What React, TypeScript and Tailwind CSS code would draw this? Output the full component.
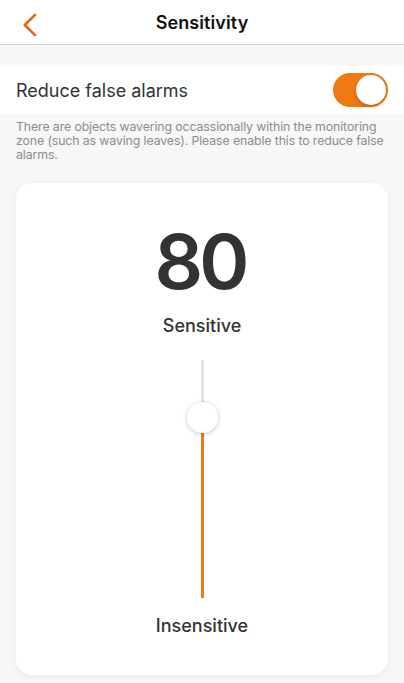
import React from 'react';

const ORANGE = '#f07a12';

function Toggle({ on }: { on: boolean }) {
  return (
    <div className={`w-[55px] h-[34px] rounded-full p-[2px] flex items-center ${on ? 'justify-end bg-[#f07a12]' : 'justify-start bg-[#e5e5e5]'}`}>
      <div className="w-[30px] h-[30px] rounded-full bg-white shadow-[0_2px_4px_rgba(0,0,0,0.2)]" />
    </div>
  );
}

function VerticalSlider({ value }: { value: number }) {
  // value 0..100, top = 100 (sensitive)
  const trackHeight = 238;
  const thumbTop = trackHeight * (1 - value / 100) - 15.5;
  return (
    <div className="relative w-[31px] h-[238px] flex justify-center">
      <div className="w-[3px] h-full flex flex-col">
        <div className="bg-[#e3e3e3]" style={{ height: thumbTop + 15 }} />
        <div className="flex-1" style={{ background: ORANGE }} />
      </div>
      <div
        className="absolute left-0 w-[31px] h-[31px] rounded-full bg-white shadow-[0_1px_5px_rgba(0,0,0,0.22)]"
        style={{ top: thumbTop }}
      />
    </div>
  );
}

export default function App() {
  return (
    <div className="min-h-screen bg-[#f6f7f7] font-['Inter',sans-serif] text-[#333]">
      {/* header */}
      <header className="h-[45px] bg-white border-b border-[#d6d6d6] flex items-center justify-center relative">
        <button className="absolute left-[17px] top-[9px] p-1">
          <svg width="17" height="24" viewBox="0 0 17 24" fill="none">
            <path d="M14 1.8 L3.8 12 L14 22.2" stroke="#e2661d" strokeWidth="2.6" strokeLinecap="round" strokeLinejoin="round" />
          </svg>
        </button>
        <h1 className="text-[18px] font-semibold text-[#111] tracking-[0.1px]">Sensitivity</h1>
      </header>

      <div className="h-[21px]" />

      <div className="h-[48px] bg-white flex items-center justify-between pl-4 pr-4">
        <span className="text-[18px] text-[#333]">Reduce false alarms</span>
        <Toggle on />
      </div>

      <p className="px-4 pt-[6px] text-[12.3px] leading-[14px] tracking-[-0.1px] text-[#8c8c8c]">
        There are objects wavering occassionally within the monitoring zone (such as waving leaves). Please enable this to reduce false alarms.
      </p>

      <div className="px-4 pt-[21px] pb-4">
        <div className="bg-white rounded-[16px] shadow-[0_2px_6px_rgba(0,0,0,0.06)] flex flex-col items-center pt-[38px] pb-[37px]">
          <div className="text-[76px] leading-[80px] font-semibold text-[#333] tracking-[-4px] pr-[4px]">80</div>
          <div className="mt-[13px] text-[18px] leading-[24px] font-medium text-[#333]">Sensitive</div>
          <div className="mt-[22px]">
            <VerticalSlider value={76} />
          </div>
          <div className="mt-[16px] text-[18px] leading-[24px] font-medium text-[#333]">Insensitive</div>
        </div>
      </div>
    </div>
  );
}
